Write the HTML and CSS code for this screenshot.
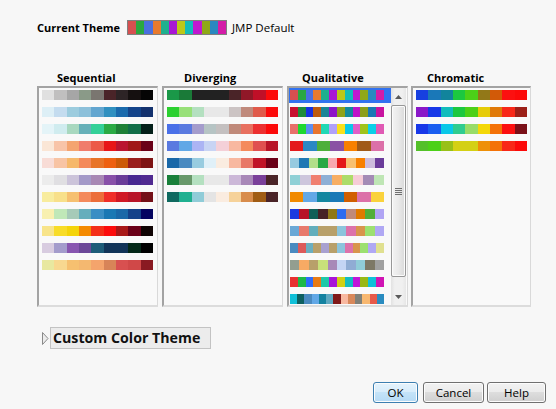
FILE: index.html
```html
<!DOCTYPE html>
<html>
<head>
<meta charset="utf-8">
<link rel="stylesheet" href="styles.css">
</head>
<body>
<div class="dialog">
  <div class="current">
    <span class="label">Current Theme</span>
    <div class="swatch" id="current"></div>
    <span class="name">JMP Default</span>
  </div>
  <div class="columns">
    <div class="col">
      <div class="col-title t-seq">Sequential</div>
      <div class="panel"><div class="list" id="seq"></div></div>
    </div>
    <div class="col">
      <div class="col-title t-div">Diverging</div>
      <div class="panel"><div class="list" id="div"></div></div>
    </div>
    <div class="col">
      <div class="col-title t-qual">Qualitative</div>
      <div class="panel panel-scroll">
        <div class="items" id="qual"></div>
        <div class="scrollbar">
          <div class="sb-btn"><svg width="7" height="4" viewBox="0 0 7 4"><polygon points="3.5,0 7,4 0,4" fill="#5a5a5a"/></svg></div>
          <div class="sb-thumb">
            <svg width="7" height="7" viewBox="0 0 7 7"><g fill="#6f6f6f"><rect x="0" y="0" width="7" height="1"/><rect x="0" y="2" width="7" height="1"/><rect x="0" y="4" width="7" height="1"/><rect x="0" y="6" width="7" height="1"/></g></svg>
          </div>
          <div class="sb-track"></div>
          <div class="sb-btn"><svg width="7" height="4" viewBox="0 0 7 4"><polygon points="0,0 7,0 3.5,4" fill="#5a5a5a"/></svg></div>
        </div>
      </div>
    </div>
    <div class="col col-last">
      <div class="col-title t-chrom">Chromatic</div>
      <div class="panel"><div class="list" id="chrom"></div></div>
    </div>
  </div>
  <div class="custom">
    <svg class="disclosure" width="7" height="13" viewBox="0 0 7 13"><polygon points="0.5,0.5 6,6.5 0.5,12.5" fill="#ececec" stroke="#8a8a8a" stroke-width="1"/></svg>
    <div class="custom-box">Custom Color Theme</div>
  </div>
  <div class="buttons">
    <button class="btn btn-default btn-ok">OK</button>
    <button class="btn btn-cancel">Cancel</button>
    <button class="btn btn-help">Help</button>
  </div>
</div>
<script src="script.js"></script>
</body>
</html>
```
FILE: styles.css
```css
* { box-sizing: border-box; }
html, body { margin: 0; }
body {
  background: #f7f7f7;
  font-family: "Open Sans", "Noto Sans", sans-serif;
  color: #000;
  width: 556px;
  height: 409px;
  overflow: hidden;
}
.dialog { padding: 20px 10px 0 37px; }

.current { display: flex; align-items: center; height: 15px; }
.label { font-weight: 700; font-size: 11px; margin-right: 7px; }
.swatch { width: 100px; height: 15px; border: 1px solid #7f7f7f; display: flex; }
.swatch span { flex: 1; }
.name { font-size: 11.5px; margin-left: 5px; }

.columns { display: flex; gap: 4px; margin-top: 35px; }
.col { width: 121px; }
.col-last { width: 120px; margin-left: -1px; }
.col-title { height: 16px; line-height: 15px; font-weight: 700; font-size: 11px; }
.t-seq { padding-left: 20px; }
.t-div { padding-left: 22px; }
.t-qual { padding-left: 15px; }
.t-chrom { padding-left: 16px; }

.panel {
  height: 221px;
  background: #f9f9f9;
  border-top: 2px solid #a3a3a3;
  border-left: 2px solid #a3a3a3;
  border-right: 1px solid #d9d9d9;
  border-bottom: 2px solid #dcdcdc;
  padding: 2px 0 0 3px;
  overflow: hidden;
}
.bar { display: flex; width: 111px; height: 10px; margin-bottom: 7px; }
.bar span { flex: 1; }

.panel-scroll { display: flex; padding: 0 1px 0 0; }
.items { width: 102px; overflow: hidden; }
.item { height: 15px; margin-bottom: 2px; padding: 2px 0 0 1px; }
.item .bar { width: 94px; margin: 0; }
.item.selected { background: #3272ef; }

.scrollbar {
  width: 15px;
  display: flex;
  flex-direction: column;
  background: linear-gradient(to right, #e2e2e2, #f0f0f0 25%, #f0f0f0 75%, #e6e6e6);
}
.sb-btn { height: 17px; display: flex; align-items: center; justify-content: center; }
.sb-thumb {
  height: 172px;
  border: 1px solid #979797;
  border-radius: 2px;
  background: linear-gradient(to right, #f3f3f3, #e9e9e9 50%, #d9d9d9);
  box-shadow: inset 0 0 0 1px #fbfbfb;
  display: flex;
  align-items: center;
  justify-content: center;
}
.sb-track { flex: 1; }

.custom { display: flex; align-items: center; margin-top: 20px; }
.disclosure { margin-left: 5px; margin-right: 1px; }
.custom-box {
  width: 161px;
  height: 22px;
  background: #ececec;
  border: 1px solid #c3c3c3;
  font-weight: 700;
  font-size: 14.2px;
  line-height: 19px;
  padding-left: 2px;
  color: #111;
}

.buttons { display: flex; justify-content: flex-end; margin-top: 33px; }
.btn {
  height: 21px;
  font-family: "Open Sans", "Noto Sans", sans-serif;
  font-size: 11.5px;
  color: #000;
  border: 1px solid #707070;
  border-radius: 3px;
  background: linear-gradient(#f2f2f2, #ebebeb 50%, #dddddd 50%, #cfcfcf);
  box-shadow: inset 0 0 0 1px #fcfcfc;
  padding: 0;
}
.btn-default {
  border-color: #3c7fb1;
  background: linear-gradient(#e5f3fc, #d6ecfb 50%, #c4e3f8 50%, #b5daf5);
}
.btn-ok { width: 45px; margin-right: 5px; }
.btn-cancel { width: 61px; margin-right: 3px; }
.btn-help { width: 59px; }
```
FILE: script.js
```js
var current = ["d65050","2aa840","4a70e0","e87a2e","1fb08e","a818d4","bcc818","12bcb8","c018d0","8fa818","2a88c0","d41ca8"];
var seq = [
  ["e0e0e0","c0bfbf","a6a6a6","8a9a88","7a7670","4a2428","2d2426","151010","050505"],
  ["ddeff6","c4dcef","9cccde","8cc0da","62a6d0","3090c0","1a6aac","14448a","14326e"],
  ["e4f4f8","d0ecef","a8d8bf","66b0b8","34d098","2aaa44","1e8036","126e48","04201a"],
  ["fae6d6","f8c4a8","f4a470","f07c6c","ec5a48","e81618","ba1530","a01818","6a0018"],
  ["f8dcd6","f8c4a4","f6b86a","f48a5a","e87428","ee6010","cc5a08","9a1e1c","7e1414"],
  ["ececec","e0dfe2","ccc4da","a49ac8","a888b4","8850a8","6a3c98","482890","502a90"],
  ["f8ec9e","f8e08a","f6c070","f48a5c","ec6e3a","f02e28","d01824","b81428","741018"],
  ["f8f0b0","c0e8b8","a6cab8","66aebc","3a8ec4","1a78b4","1a68a8","14428a","040460"],
  ["f8e48a","f8dc28","f4d40a","f48a00","f42e18","fc0c0c","a81818","6a0018","100404"],
  ["d8cce0","a49ccc","8856b0","6c4898","1e5c78","123458","123458","042818","000000"],
  ["e8e8a0","f8d890","f6c070","f4b870","f4a46c","d88458","d85050","d04848","8a1a22"]
];
var div = [
  ["1a9848","1a7a38","222222","222222","222222","4a2428","901828","c01028","fc0a0a"],
  ["2cd030","98e078","b4e0c0","e8e8e8","e8e8e8","ccc4c4","c08a7c","e05a4a","fc0a0a"],
  ["4a70e8","5a7ae0","a49ccc","b6c4c4","c4c0c0","c08a7a","e87060","ec3030","fc0a0a"],
  ["5a7ae0","62a8e6","acb4f4","c8d4f4","f4d0d8","f8b8a0","f48a5c","e05050","b81428"],
  ["1a68a8","4a8ac0","98cce0","e0f0f8","faece0","f8b8a0","e87868","c01428","6a0018"],
  ["1a803a","68986a","b4e0c0","e8e8e8","e8e8e8","ccb8d8","a888b8","7a409a","4a2428"],
  ["106a60","20b090","90ccd8","e4e4e4","faece0","f6d29a","d88c4c","a05c14","4a2428"]
];
var qual = [
  current,
  ["c8102e","1e8c3a","1632e0","bd5a0e","1a8596","8c14c8","8fa218","138a9c","be14c8","8c9f18","1a78b4","c814a0"],
  ["e8706a","1ed830","5b8ef0","e8742e","20d8b4","b0a0f8","f8e01a","0ac8e8","e05ec8","a0c31a","0ad0e8","e05ab4"],
  ["e41a1c","2a88c4","4daf3a","8a52a4","f88000","a05a18","dc70a8"],
  ["96cae0","1f78b4","b2df8a","2aa844","f8a8b0","e41818","f8c070","f88000","ccbcdc","6a3c9a"],
  ["8fd0d6","cdc6dc","f08070","8eafd5","f8ae62","acdc68","f6ccd7","a48bb5","bfe6b5"],
  ["f18a00","62a8e6","14879f","1a79b6","d15e00","dc70a8","fad23c"],
  ["1a3ae0","b81427","106058","462226","8f7818","2e6cf0","c08a7a","e07a00","52ae3a","b0a4f4"],
  ["6aa8d6","e87a6c","62aebc","b8a06a","b8a06a","8cc4dc","dc72aa","d8944c","9ce070","b0a8f4"],
  ["4a8ac0","dc5a5a","6aaec0","b8a06a","a8a0d0","b8a06a","8cc4dc","dc72aa","d8944c","9ce070","b0a8f4","e0e090"],
  ["939e90","f7aa64","b8a06a","c8e07a","a888b8","c4d4f4","90acd4","90ccd8","7d7866","a0a0a0"],
  ["e83030","1eb848","2e6cf8","e87a14","1ec8a8","a814d8","d0d014","12bcc0","c014d8","98b814","10c0d8","d014b4"],
  ["10c0d8","0e6060","4a8ac0","62a8e6","1482a0","5ea8c0","801818","f8b8a0","d8885a","808078","f8b870","e85a4a","2a8cc0"]
];
var chrom = [
  ["1740e0","1a78b8","12849c","1cc840","4cd018","927818","d25a08","fc1010","fc0a0a"],
  ["8a18c8","1838e8","12bcbc","1cc840","4cd018","e6cc08","e07a08","f82818","9c2018"],
  ["1838e8","1a5ef0","0ac8e8","30cc90","98dc68","f4d808","f47208","fc1010","7a1018"],
  ["54c02a","4cd018","98c018","d4d014","d4d014","ee9008","f47208","f82818","fc0a0a"]
];
function makeBar(colors, cls) {
  var bar = document.createElement("div");
  bar.className = cls;
  colors.forEach(function (c) {
    var s = document.createElement("span");
    s.style.background = "#" + c;
    bar.appendChild(s);
  });
  return bar;
}
function fill(id, rows) {
  var el = document.getElementById(id);
  rows.forEach(function (r) { el.appendChild(makeBar(r, "bar")); });
}
fill("seq", seq);
fill("div", div);
fill("chrom", chrom);
var q = document.getElementById("qual");
qual.forEach(function (r, i) {
  var item = document.createElement("div");
  item.className = i === 0 ? "item selected" : "item";
  item.appendChild(makeBar(r, "bar"));
  q.appendChild(item);
});
var cur = document.getElementById("current");
current.forEach(function (c) {
  var s = document.createElement("span");
  s.style.background = "#" + c;
  cur.appendChild(s);
});
```
